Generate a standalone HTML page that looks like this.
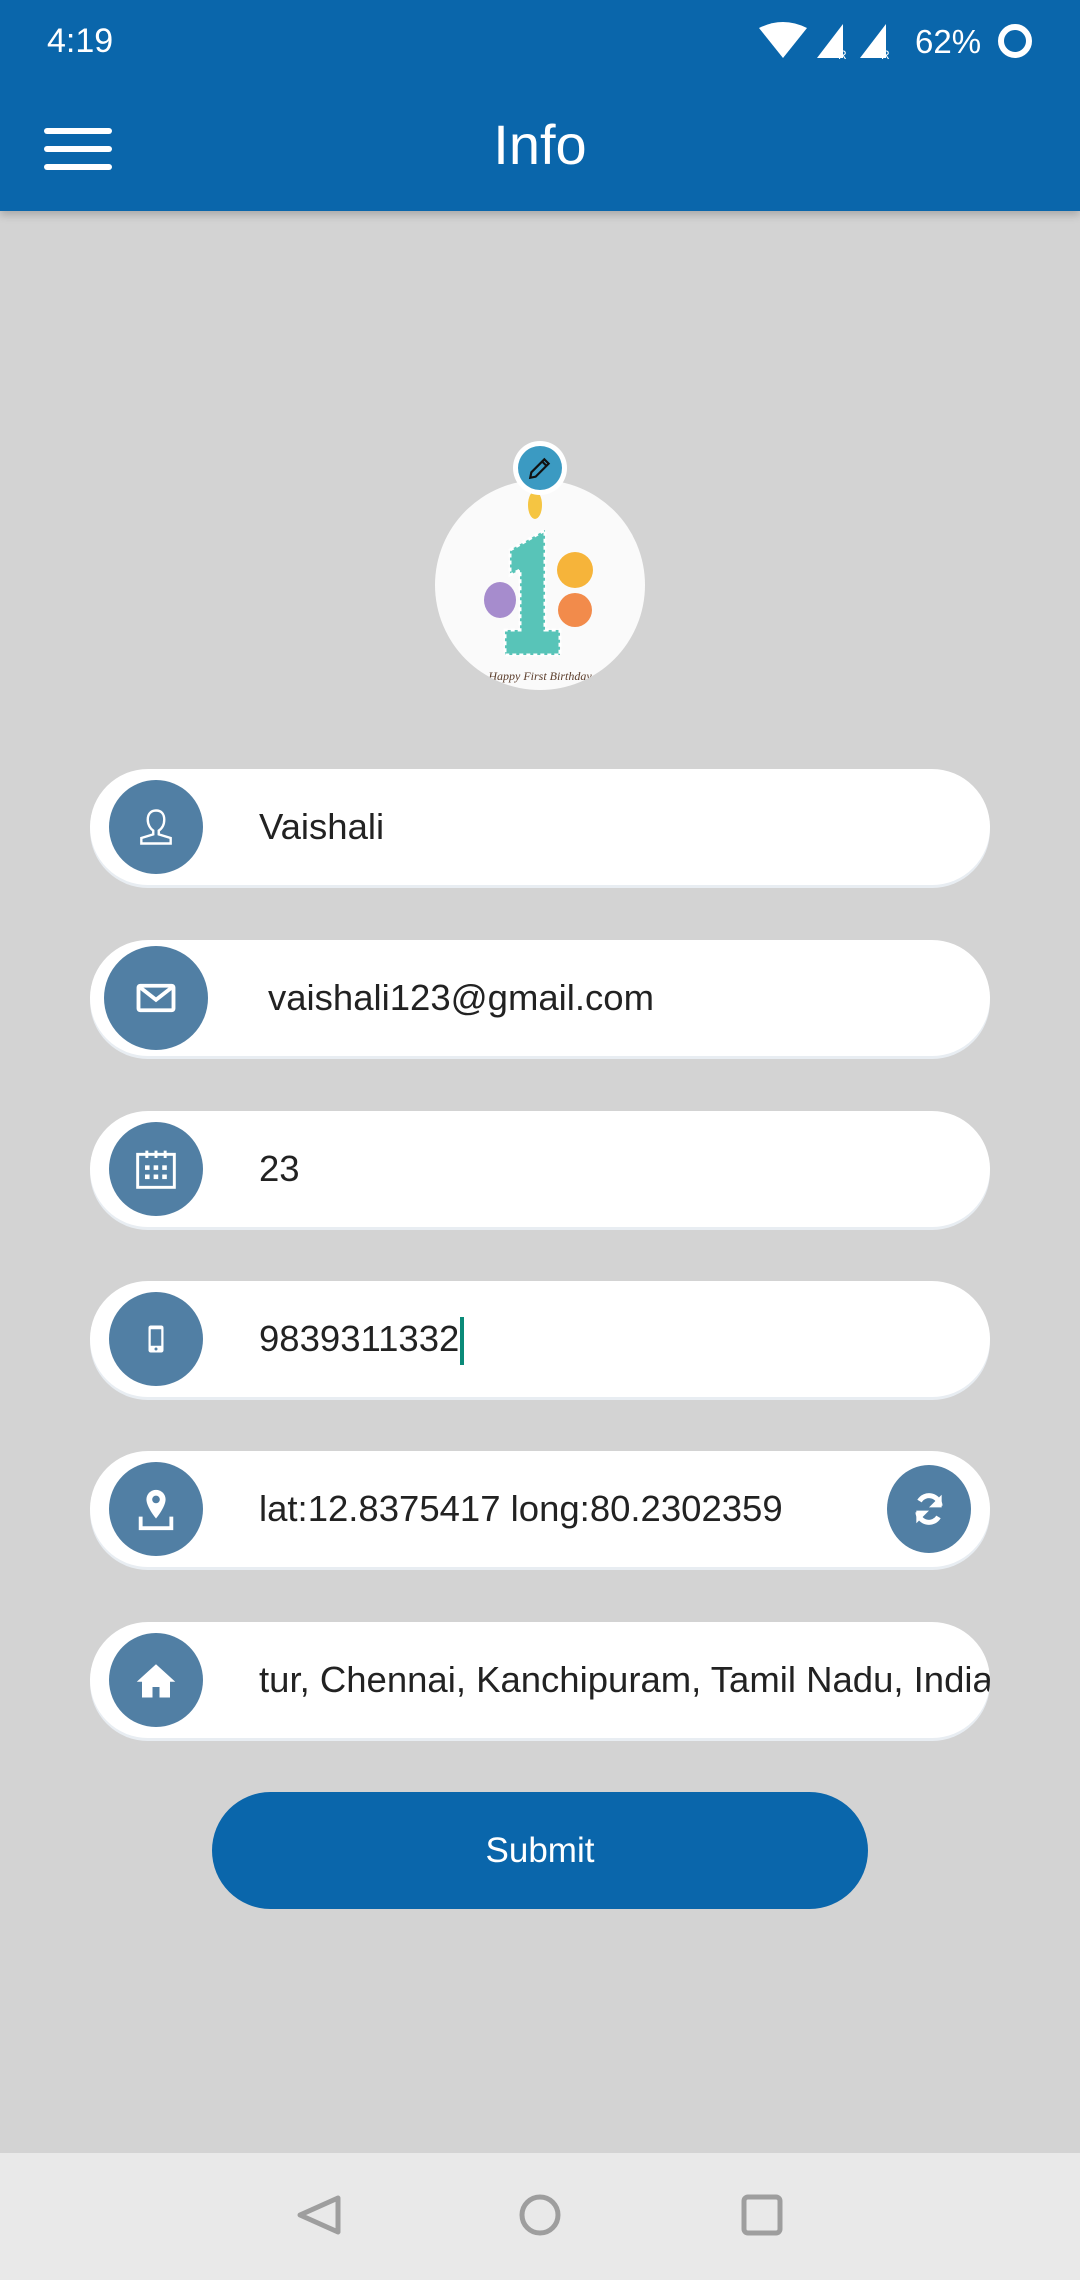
<!DOCTYPE html>
<html><head><meta charset="utf-8"><style>
*{margin:0;padding:0;box-sizing:border-box}
body{width:1080px;height:2280px;background:#d3d3d3;font-family:"Liberation Sans",sans-serif;position:relative;overflow:hidden}
.top{position:absolute;left:0;top:0;width:1080px;height:211px;background:#0a66ab;box-shadow:0 4px 8px rgba(0,0,0,.2)}
.abs{position:absolute}
.field{position:absolute;left:90px;width:900px;height:116px;background:#fff;border-radius:58px;box-shadow:0 3px 0 #e8edf2}
.ic{position:absolute;left:19px;top:11px;width:94px;height:94px;border-radius:50%;background:#517fa4;display:flex;align-items:center;justify-content:center}
.txt{position:absolute;left:169px;top:0;line-height:116px;font-size:36.5px;color:#222;white-space:nowrap}
</style></head><body>
<div class="top">
 <div class="abs" style="left:47px;top:22px;color:#fff;font-size:34px">4:19</div>
 <svg class="abs" style="left:755px;top:20px" width="300" height="40" viewBox="0 0 300 40">
  <path d="M4 8 Q28 -4 52 8 L28 38 Z" fill="#fff"/>
  <path d="M62 38 L88 4 L88 38 Z" fill="#fff"/><text x="83" y="39" font-size="12" fill="#fff" font-family="Liberation Sans">R</text>
  <path d="M105 38 L131 4 L131 38 Z" fill="#fff"/><text x="126" y="39" font-size="12" fill="#fff" font-family="Liberation Sans">R</text>
  <text x="160" y="33" font-size="33" fill="#fff" font-family="Liberation Sans">62%</text>
  <circle cx="260" cy="21" r="14" fill="none" stroke="#fff" stroke-width="6"/>
 </svg>
 <div class="abs" style="left:44px;top:128px;width:68px;height:6px;background:#fff;border-radius:3px"></div>
 <div class="abs" style="left:44px;top:146px;width:68px;height:6px;background:#fff;border-radius:3px"></div>
 <div class="abs" style="left:44px;top:164px;width:68px;height:6px;background:#fff;border-radius:3px"></div>
 <div class="abs" style="left:0;width:1080px;top:112px;text-align:center;color:#fff;font-size:56px">Info</div>
</div>

<div class="abs" style="left:435px;top:480px;width:210px;height:210px;border-radius:50%;background:#fafafa;overflow:hidden">
 <svg width="210" height="210" viewBox="0 0 210 210">
  <ellipse cx="100" cy="25" rx="7" ry="14" fill="#f5c542"/>
  <path d="M75 70 L110 50 L110 150 L125 150 L125 175 L70 175 L70 150 L85 150 L85 90 L75 95 Z" fill="#58c4b8" stroke="#fff" stroke-width="3" stroke-dasharray="4 3"/>
  <circle cx="140" cy="90" r="18" fill="#f6b43a"/>
  <circle cx="140" cy="130" r="17" fill="#f28b4b"/>
  <ellipse cx="65" cy="120" rx="16" ry="18" fill="#a68ccd"/>
  <text x="105" y="200" font-size="12" text-anchor="middle" fill="#5a3c2a" font-family="Liberation Serif" font-style="italic">Happy First Birthday</text>
 </svg>
</div>
<div class="abs" style="left:513px;top:441px;width:54px;height:54px;border-radius:50%;background:#fff"></div>
<div class="abs" style="left:518px;top:446px;width:44px;height:44px;border-radius:50%;background:#3b9ac2;display:flex;align-items:center;justify-content:center">
 <svg width="26" height="26" viewBox="0 0 24 24"><path d="M3 21l1-5L16 4l4 4L8 20z M14 6l4 4" fill="none" stroke="#111" stroke-width="2"/></svg>
</div>

<div class="field" style="top:769px"><div class="ic"><svg width="44" height="44" viewBox="0 0 24 24"><path d="M12 3c-3 0-4.5 2.2-4.5 5s1.5 5 3 6v2L4 18v3h16v-3l-6.5-2v-2c1.5-1 3-3 3-6s-1.5-5-4.5-5z" fill="none" stroke="#fff" stroke-width="1.3"/></svg></div><div class="txt">Vaishali</div></div>

<div class="field" style="top:940px"><div class="ic" style="left:14px;top:6px;width:104px;height:104px"><svg width="42" height="42" viewBox="0 0 24 24"><rect x="2" y="5" width="20" height="14" rx="1" fill="none" stroke="#fff" stroke-width="2.2"/><path d="M3 6l9 7 9-7" fill="none" stroke="#fff" stroke-width="2.2"/></svg></div><div class="txt" style="left:178px">vaishali123@gmail.com</div></div>

<div class="field" style="top:1111px"><div class="ic"><svg width="44" height="44" viewBox="0 0 24 24"><rect x="2" y="4" width="20" height="18" fill="none" stroke="#fff" stroke-width="1.6"/><path d="M7 2v4M12 2v4M17 2v4" stroke="#fff" stroke-width="1.6"/><g fill="#fff"><rect x="6" y="10" width="2.5" height="2.5"/><rect x="10.7" y="10" width="2.5" height="2.5"/><rect x="15.4" y="10" width="2.5" height="2.5"/><rect x="6" y="15" width="2.5" height="2.5"/><rect x="10.7" y="15" width="2.5" height="2.5"/><rect x="15.4" y="15" width="2.5" height="2.5"/></g></svg></div><div class="txt">23</div></div>

<div class="field" style="top:1281px"><div class="ic"><svg width="36" height="36" viewBox="0 0 24 24"><rect x="7" y="3" width="10" height="18" rx="1.5" fill="#fff"/><rect x="8.5" y="5.5" width="7" height="11" fill="#517fa4"/><circle cx="12" cy="18.7" r="1" fill="#517fa4"/></svg></div><div class="txt">9839311332<span style="display:inline-block;width:4px;height:48px;background:#0a8a78;vertical-align:middle;margin-left:1px"></span></div></div>

<div class="field" style="top:1451px"><div class="ic"><svg width="46" height="46" viewBox="0 0 24 24"><path d="M12 2a5 5 0 0 0-5 5c0 4 5 10 5 10s5-6 5-10a5 5 0 0 0-5-5z" fill="#fff"/><circle cx="12" cy="7" r="2" fill="#517fa4"/><path d="M4 16v6h16v-6" fill="none" stroke="#fff" stroke-width="2"/></svg></div><div class="txt">lat:12.8375417 long:80.2302359</div>
 <div class="abs" style="left:797px;top:14px;width:84px;height:88px;border-radius:50%;background:#517fa4;display:flex;align-items:center;justify-content:center"><svg width="38" height="38" viewBox="0 0 24 24"><path d="M19 10a7 7 0 0 0-13-3M5 14a7 7 0 0 0 13 3" fill="none" stroke="#fff" stroke-width="3.2"/><path d="M20 3v8h-8z M4 21v-8h8z" fill="#fff"/></svg></div></div>

<div class="field" style="top:1622px;overflow:hidden"><div class="ic"><svg width="42" height="42" viewBox="0 0 24 24"><path d="M12 3L1 13h3v9h6v-6h4v6h6v-9h3z" fill="#fff"/></svg></div><div class="txt">tur, Chennai, Kanchipuram, Tamil Nadu, India</div></div>

<div class="abs" style="left:212px;top:1792px;width:656px;height:117px;border-radius:59px;background:#0a66ab;color:#fff;font-size:35px;text-align:center;line-height:117px">Submit</div>

<div class="abs" style="left:0;top:2153px;width:1080px;height:127px;background:#e9e9e9">
 <svg class="abs" style="left:0;top:0" width="1080" height="127" viewBox="0 0 1080 127">
  <path d="M338 45 L300 62 L338 79 Z" fill="none" stroke="#9e9e9e" stroke-width="5" stroke-linejoin="round"/>
  <circle cx="540" cy="62" r="18" fill="none" stroke="#9e9e9e" stroke-width="5"/>
  <rect x="744" y="44" width="36" height="36" rx="4" fill="none" stroke="#9e9e9e" stroke-width="5"/>
 </svg>
</div>
</body></html>
